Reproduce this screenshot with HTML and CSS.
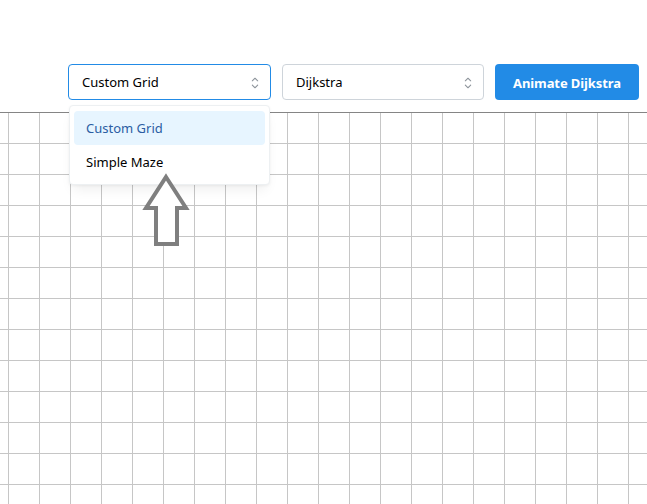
FILE: index.html
```html
<!DOCTYPE html>
<html lang="en">
<head>
<meta charset="utf-8">
<title>Pathfinding Visualizer</title>
<link rel="stylesheet" href="styles.css">
</head>
<body>
<div class="page">
  <header class="toolbar">
    <div class="select-wrap">
      <div class="select select--focused">
        <span class="select__value">Custom Grid</span>
        <svg class="select__chevron" viewBox="0 0 15 15" width="18" height="18"><path fill="currentColor" fill-rule="evenodd" clip-rule="evenodd" d="M4.93179 5.43179C4.75605 5.60753 4.75605 5.89245 4.93179 6.06819C5.10753 6.24392 5.39245 6.24392 5.56819 6.06819L7.49999 4.13638L9.43179 6.06819C9.60753 6.24392 9.89245 6.24392 10.0682 6.06819C10.2439 5.89245 10.2439 5.60753 10.0682 5.43179L7.81819 3.18179C7.73379 3.0974 7.61933 3.04999 7.49999 3.04999C7.38064 3.04999 7.26618 3.0974 7.18179 3.18179L4.93179 5.43179ZM10.0682 9.56819C10.2439 9.39245 10.2439 9.10753 10.0682 8.93179C9.89245 8.75606 9.60753 8.75606 9.43179 8.93179L7.49999 10.8636L5.56819 8.93179C5.39245 8.75606 5.10753 8.75606 4.93179 8.93179C4.75605 9.10753 4.75605 9.39245 4.93179 9.56819L7.18179 11.8182C7.35753 11.9939 7.64245 11.9939 7.81819 11.8182L10.0682 9.56819Z"/></svg>
      </div>
      <div class="dropdown">
        <div class="dropdown__item dropdown__item--active">Custom Grid</div>
        <div class="dropdown__item">Simple Maze</div>
      </div>
    </div>
    <div class="select select--second">
      <span class="select__value">Dijkstra</span>
      <svg class="select__chevron" viewBox="0 0 15 15" width="18" height="18"><path fill="currentColor" fill-rule="evenodd" clip-rule="evenodd" d="M4.93179 5.43179C4.75605 5.60753 4.75605 5.89245 4.93179 6.06819C5.10753 6.24392 5.39245 6.24392 5.56819 6.06819L7.49999 4.13638L9.43179 6.06819C9.60753 6.24392 9.89245 6.24392 10.0682 6.06819C10.2439 5.89245 10.2439 5.60753 10.0682 5.43179L7.81819 3.18179C7.73379 3.0974 7.61933 3.04999 7.49999 3.04999C7.38064 3.04999 7.26618 3.0974 7.18179 3.18179L4.93179 5.43179ZM10.0682 9.56819C10.2439 9.39245 10.2439 9.10753 10.0682 8.93179C9.89245 8.75606 9.60753 8.75606 9.43179 8.93179L7.49999 10.8636L5.56819 8.93179C5.39245 8.75606 5.10753 8.75606 4.93179 8.93179C4.75605 9.10753 4.75605 9.39245 4.93179 9.56819L7.18179 11.8182C7.35753 11.9939 7.64245 11.9939 7.81819 11.8182L10.0682 9.56819Z"/></svg>
    </div>
    <button class="btn">Animate Dijkstra</button>
  </header>
  <main class="grid"></main>
  <svg class="pointer" viewBox="0 0 55 85" width="55" height="85"><polygon points="26,8 46,39 37,39 37,75 16,75 16,39 6,39" fill="#fff" stroke="#7f7f7f" stroke-width="4" stroke-linejoin="miter"/></svg>
</div>
</body>
</html>
```
FILE: styles.css
```css
* { box-sizing: border-box; }
html, body { margin: 0; padding: 0; background: #fff; }
body {
  font-family: "Noto Sans", "Open Sans", sans-serif;
  font-size: 13px;
  color: #000;
}
.page {
  position: relative;
  display: flex;
  flex-direction: column;
  min-height: 100vh;
  overflow: hidden;
}
.toolbar {
  display: flex;
  justify-content: flex-end;
  align-items: center;
  gap: 11px;
  padding: 64px 8px 12px;
  height: 112px;
}
.select-wrap { position: relative; }
.select {
  display: flex;
  align-items: center;
  justify-content: space-between;
  height: 36px;
  width: 203px;
  padding: 1px 6px 0 13px;
  border: 1px solid #ced4da;
  border-radius: 4px;
  background: #fff;
}
.select--focused { border-color: #228be6; }
.select--second { width: 202px; }
.select__value { line-height: 33px; }
.select__chevron { color: #8d949b; display: block; }
.dropdown {
  position: absolute;
  left: 1px;
  top: 41px;
  width: 201px;
  padding: 5px 4px;
  background: #fff;
  border: 1px solid #edf0f2;
  border-radius: 4px;
  box-shadow: 0 1px 3px rgba(0,0,0,0.05), 0 8px 12px -4px rgba(0,0,0,0.07);
  z-index: 5;
}
.dropdown__item {
  height: 34px;
  line-height: 35px;
  padding: 0 12px;
  border-radius: 4px;
  color: #000;
}
.dropdown__item--active {
  background: #e7f5ff;
  color: #2b5da3;
}
.btn {
  height: 36px;
  width: 144px;
  border: 0;
  border-radius: 4px;
  background: #228be6;
  color: #fff;
  font-family: inherit;
  font-size: 13px;
  font-weight: 700;
  letter-spacing: -0.1px;
  padding: 1px 0 0;
}
.grid {
  flex: 1;
  border-top: 1px solid #858585;
  background-color: #fff;
  background-image:
    linear-gradient(to right, #c6c6c6 1px, transparent 1px),
    linear-gradient(to bottom, transparent 30px, #c6c6c6 30px);
  background-size: 31px 31px, 31px 31px;
  background-position: 8px 0, 0 0;
}
.pointer {
  position: absolute;
  left: 140px;
  top: 169px;
  z-index: 10;
}
```
